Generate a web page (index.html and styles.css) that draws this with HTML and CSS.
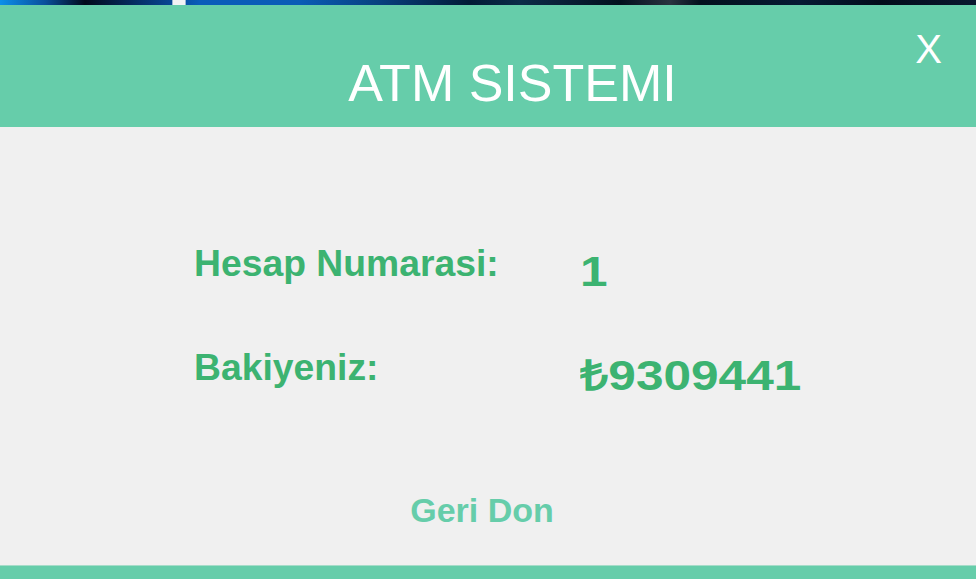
FILE: index.html
```html
<!DOCTYPE html>
<html lang="tr">
<head>
<meta charset="utf-8">
<title>ATM SISTEMI</title>
<link rel="stylesheet" href="styles.css">
</head>
<body>
<div class="desk"><span class="desk-tab"></span></div>
<header class="header">
  <h1 class="title">ATM SISTEMI</h1>
  <span class="close">X</span>
</header>
<main class="content">
  <div class="info">
    <div class="row">
      <span class="label">Hesap Numarasi:</span>
      <span class="value">1</span>
    </div>
    <div class="row">
      <span class="label">Bakiyeniz:</span>
      <span class="value">₺9309441</span>
    </div>
  </div>
  <div class="actions">
    <span class="back">Geri Don</span>
  </div>
</main>
<footer class="footer"></footer>
</body>
</html>
```

FILE: styles.css
```css
* { box-sizing: border-box; }
html, body {
  margin: 0;
  padding: 0;
  width: 976px;
  height: 579px;
  overflow: hidden;
  background: #f0f0f0;
  font-family: "Liberation Sans", Arial, sans-serif;
}
.desk {
  height: 5px;
  display: flex;
  background: linear-gradient(90deg, #0b90ea 0px, #0a4f9c 45px, #01091a 85px, #06306a 140px, #0a5cba 200px, #0a5cb6 300px, #08407e 380px, #021a36 470px, #0b2c48 520px, #0a2038 560px, #02101e 620px, #2a3240 670px, #03101e 700px, #061a34 800px, #020c1a 880px, #0a1830 976px);
}
.desk-tab {
  margin-left: 172px;
  width: 14px;
  height: 5px;
  background: #f2f2f4;
  border-left: 1px solid #9ab4d4;
  border-right: 1px solid #9ab4d4;
}
.header {
  position: relative;
  height: 122px;
  background: #66cdaa;
  padding-top: 52px;
  padding-left: 49px;
  text-align: center;
}
.title {
  margin: 0;
  font-size: 52px;
  line-height: 1;
  font-weight: normal;
  color: #ffffff;
}
.close {
  position: absolute;
  top: 24px;
  right: 34px;
  font-size: 40px;
  line-height: 1;
  color: #ffffff;
}
.content {
  height: 438px;
  display: flex;
  flex-direction: column;
  padding-top: 118px;
}
.info {
  display: flex;
  flex-direction: column;
  gap: 67px;
  padding-left: 194px;
}
.row {
  display: flex;
  align-items: flex-start;
  height: 37px;
}
.label {
  width: 386px;
  font-size: 37.3px;
  line-height: 1;
  font-weight: bold;
  color: #3cb371;
}
.value {
  display: inline-block;
  margin-top: 6px;
  font-size: 42px;
  line-height: 1;
  font-weight: bold;
  color: #3cb371;
  transform: scaleX(1.18);
  transform-origin: left top;
}
.actions {
  display: flex;
  justify-content: center;
  padding-top: 107px;
  padding-right: 12px;
}
.back {
  font-size: 34px;
  line-height: 1;
  font-weight: bold;
  color: #66cdaa;
}
.footer {
  height: 14px;
  background: #66cdaa;
  border-top: 1px solid #a6dcc9;
}
```
